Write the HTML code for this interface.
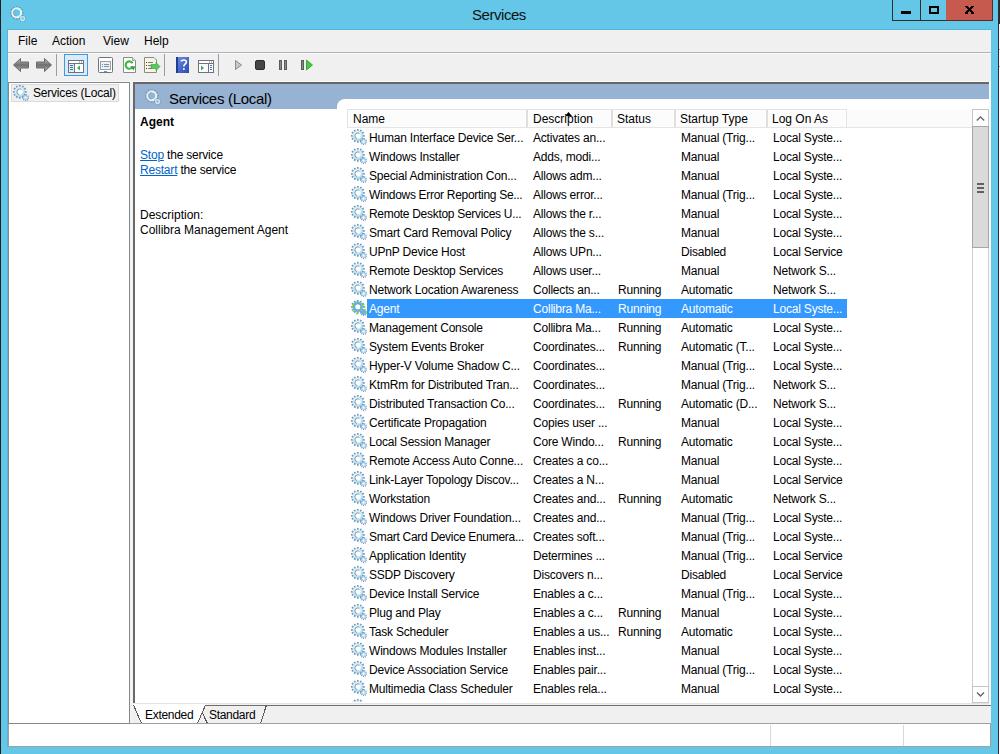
<!DOCTYPE html>
<html><head><meta charset="utf-8"><style>
html,body{margin:0;padding:0}
body{width:1000px;height:754px;overflow:hidden;position:relative;background:#64c7e8;font-family:"Liberation Sans",sans-serif;font-size:12px;color:#000}
div{position:absolute}
.t{white-space:pre}
.lk{color:#0066cc;text-decoration:underline}
</style></head><body>
<svg width="0" height="0" style="position:absolute"><defs><symbol id="g" viewBox="0 0 16 16">
<radialGradient id="rg" cx="0.4" cy="0.35" r="0.7"><stop offset="0" stop-color="#eefafe"/><stop offset="0.6" stop-color="#c8ecf9"/><stop offset="1" stop-color="#9cc8ee"/></radialGradient>
<path d="M10.80,5.95 L13.70,5.95 L13.70,7.65 L10.80,7.65ZM10.69,8.06 L13.20,9.51 L12.35,10.99 L9.84,9.54ZM9.54,9.84 L10.99,12.35 L9.51,13.20 L8.06,10.69ZM7.65,10.80 L7.65,13.70 L5.95,13.70 L5.95,10.80ZM5.54,10.69 L4.09,13.20 L2.61,12.35 L4.06,9.84ZM3.76,9.54 L1.25,10.99 L0.40,9.51 L2.91,8.06ZM2.80,7.65 L-0.10,7.65 L-0.10,5.95 L2.80,5.95ZM2.91,5.54 L0.40,4.09 L1.25,2.61 L3.76,4.06ZM4.06,3.76 L2.61,1.25 L4.09,0.40 L5.54,2.91ZM5.95,2.80 L5.95,-0.10 L7.65,-0.10 L7.65,2.80ZM8.06,2.91 L9.51,0.40 L10.99,1.25 L9.54,3.76ZM9.84,4.06 L12.35,2.61 L13.20,4.09 L10.69,5.54Z" fill="#6f98bf"/>
<circle cx="6.8" cy="6.8" r="5.3" fill="url(#rg)"/>
<circle cx="6.8" cy="6.8" r="2.8" fill="#fff"/>
<circle cx="6.8" cy="6.8" r="2.9" fill="none" stroke="#6b7682" stroke-width="0.8" stroke-dasharray="10 8.2" stroke-dashoffset="-5"/>
<path d="M14.47,12.42 L16.14,12.76 L15.92,13.83 L14.25,13.50ZM14.15,13.67 L15.21,14.99 L14.35,15.68 L13.29,14.35ZM13.10,14.41 L13.06,16.11 L11.96,16.08 L12.00,14.39ZM11.82,14.31 L10.69,15.59 L9.87,14.86 L11.00,13.58ZM10.90,13.41 L9.22,13.66 L9.06,12.58 L10.74,12.32ZM10.78,12.13 L9.33,11.24 L9.90,10.30 L11.35,11.19ZM11.51,11.07 L10.97,9.46 L12.01,9.11 L12.55,10.72ZM12.75,10.72 L13.37,9.14 L14.39,9.54 L13.77,11.13ZM13.92,11.26 L15.41,10.44 L15.94,11.41 L14.44,12.22Z" fill="#7199bf"/>
<circle cx="12.6" cy="12.6" r="2.4" fill="#b4d6ee"/>
<circle cx="12.6" cy="12.6" r="1.1" fill="#fff"/>
</symbol>
<symbol id="gs" viewBox="0 0 16 16">
<path d="M10.80,5.95 L13.70,5.95 L13.70,7.65 L10.80,7.65ZM10.69,8.06 L13.20,9.51 L12.35,10.99 L9.84,9.54ZM9.54,9.84 L10.99,12.35 L9.51,13.20 L8.06,10.69ZM7.65,10.80 L7.65,13.70 L5.95,13.70 L5.95,10.80ZM5.54,10.69 L4.09,13.20 L2.61,12.35 L4.06,9.84ZM3.76,9.54 L1.25,10.99 L0.40,9.51 L2.91,8.06ZM2.80,7.65 L-0.10,7.65 L-0.10,5.95 L2.80,5.95ZM2.91,5.54 L0.40,4.09 L1.25,2.61 L3.76,4.06ZM4.06,3.76 L2.61,1.25 L4.09,0.40 L5.54,2.91ZM5.95,2.80 L5.95,-0.10 L7.65,-0.10 L7.65,2.80ZM8.06,2.91 L9.51,0.40 L10.99,1.25 L9.54,3.76ZM9.84,4.06 L12.35,2.61 L13.20,4.09 L10.69,5.54Z" fill="#5ea4f0"/>
<circle cx="6.8" cy="6.8" r="5.3" fill="#72b2f5"/>
<circle cx="6.8" cy="6.8" r="3.6" fill="#5a9cec"/>
<circle cx="6.8" cy="6.8" r="2.6" fill="#fff"/>
<path d="M14.47,12.42 L16.14,12.76 L15.92,13.83 L14.25,13.50ZM14.15,13.67 L15.21,14.99 L14.35,15.68 L13.29,14.35ZM13.10,14.41 L13.06,16.11 L11.96,16.08 L12.00,14.39ZM11.82,14.31 L10.69,15.59 L9.87,14.86 L11.00,13.58ZM10.90,13.41 L9.22,13.66 L9.06,12.58 L10.74,12.32ZM10.78,12.13 L9.33,11.24 L9.90,10.30 L11.35,11.19ZM11.51,11.07 L10.97,9.46 L12.01,9.11 L12.55,10.72ZM12.75,10.72 L13.37,9.14 L14.39,9.54 L13.77,11.13ZM13.92,11.26 L15.41,10.44 L15.94,11.41 L14.44,12.22Z" fill="#5ea4f0"/>
<circle cx="12.6" cy="12.6" r="2.4" fill="#6aaaf2"/>
<circle cx="12.6" cy="12.6" r="1.1" fill="#7ed321"/>
<g fill="#8ad11c"><rect x="1" y="4" width="2.5" height="1.5"/><rect x="4.5" y="1.5" width="2" height="1.5"/><rect x="8.5" y="1.5" width="1.5" height="1.5"/><rect x="11.5" y="4" width="2" height="1.5"/><rect x="0.5" y="6" width="1.5" height="2"/><rect x="12.8" y="6" width="1.5" height="2"/><rect x="1.8" y="10.5" width="2.2" height="1.5"/><rect x="5" y="12.8" width="2" height="1.5"/><rect x="9" y="7" width="1.3" height="2"/><rect x="7.5" y="9.8" width="1.5" height="1.3"/><rect x="14.5" y="12" width="1.2" height="1.5"/><rect x="13.5" y="9" width="1.5" height="1.3"/></g>
</symbol>
<symbol id="gw" viewBox="0 0 16 16">
<path d="M10.80,5.95 L13.70,5.95 L13.70,7.65 L10.80,7.65ZM10.69,8.06 L13.20,9.51 L12.35,10.99 L9.84,9.54ZM9.54,9.84 L10.99,12.35 L9.51,13.20 L8.06,10.69ZM7.65,10.80 L7.65,13.70 L5.95,13.70 L5.95,10.80ZM5.54,10.69 L4.09,13.20 L2.61,12.35 L4.06,9.84ZM3.76,9.54 L1.25,10.99 L0.40,9.51 L2.91,8.06ZM2.80,7.65 L-0.10,7.65 L-0.10,5.95 L2.80,5.95ZM2.91,5.54 L0.40,4.09 L1.25,2.61 L3.76,4.06ZM4.06,3.76 L2.61,1.25 L4.09,0.40 L5.54,2.91ZM5.95,2.80 L5.95,-0.10 L7.65,-0.10 L7.65,2.80ZM8.06,2.91 L9.51,0.40 L10.99,1.25 L9.54,3.76ZM9.84,4.06 L12.35,2.61 L13.20,4.09 L10.69,5.54Z" fill="#7890a2" fill-opacity="0.85"/>
<circle cx="6.8" cy="6.8" r="4.4" fill="none" stroke="#dcf5fc" stroke-width="2.2"/>
<circle cx="6.8" cy="6.8" r="3.4" fill="none" stroke="#7a7068" stroke-width="0.7" stroke-dasharray="10 11.4" stroke-dashoffset="-5.3" stroke-opacity="0.7"/>
<path d="M14.47,12.42 L16.14,12.76 L15.92,13.83 L14.25,13.50ZM14.15,13.67 L15.21,14.99 L14.35,15.68 L13.29,14.35ZM13.10,14.41 L13.06,16.11 L11.96,16.08 L12.00,14.39ZM11.82,14.31 L10.69,15.59 L9.87,14.86 L11.00,13.58ZM10.90,13.41 L9.22,13.66 L9.06,12.58 L10.74,12.32ZM10.78,12.13 L9.33,11.24 L9.90,10.30 L11.35,11.19ZM11.51,11.07 L10.97,9.46 L12.01,9.11 L12.55,10.72ZM12.75,10.72 L13.37,9.14 L14.39,9.54 L13.77,11.13ZM13.92,11.26 L15.41,10.44 L15.94,11.41 L14.44,12.22Z" fill="#7890a2" fill-opacity="0.75"/>
<circle cx="12.6" cy="12.6" r="1.9" fill="none" stroke="#cfe9f5" stroke-width="1.3"/>
</symbol></defs></svg>
<div style="left:0px;top:0px;width:1px;height:754px;background:#231f20"></div>
<div style="left:998px;top:0px;width:2px;height:754px;background:#fdfdfd;border-left:1px solid #2b2e31;box-sizing:border-box"></div>
<div style="left:999px;top:0px;width:1px;height:24px;background:#2b2e31"></div>
<div style="left:999px;top:49px;width:1px;height:1px;background:#a8a8a8"></div>
<div style="left:999px;top:66px;width:1px;height:1px;background:#a8a8a8"></div>
<svg style="position:absolute;left:10px;top:6px" width="16" height="16"><use href="#gw"/></svg>
<div class="t" style="left:472px;top:5px;font-size:15px;line-height:20px;color:#111;letter-spacing:-0.45px">Services</div>
<div style="left:892px;top:0px;width:29px;height:21px;border:1px solid #2e2e2e;border-top:none;box-sizing:border-box;background:#64c7e8"></div>
<div style="left:901px;top:11px;width:10px;height:3px;background:#000"></div>
<div style="left:921px;top:0px;width:26px;height:21px;border:1px solid #2e2e2e;border-top:none;border-left:none;box-sizing:border-box;background:#64c7e8"></div>
<div style="left:929px;top:6px;width:10px;height:8px;border:2px solid #000;box-sizing:border-box"></div>
<div style="left:946px;top:0px;width:47px;height:21px;border:1px solid #5c2a25;border-top:none;border-left:none;box-sizing:border-box;background:#c75a4f"></div>
<svg style="position:absolute;left:960px;top:0" width="20" height="20" fill="#000"><rect x="5" y="6" width="3" height="1"/><rect x="11" y="6" width="3" height="1"/><rect x="6" y="7" width="3" height="1"/><rect x="10" y="7" width="3" height="1"/><rect x="7" y="8" width="5" height="1"/><rect x="8" y="9" width="3" height="1"/><rect x="7" y="10" width="5" height="1"/><rect x="6" y="11" width="3" height="1"/><rect x="10" y="11" width="3" height="1"/><rect x="5" y="12" width="3" height="1"/><rect x="11" y="12" width="3" height="1"/><rect x="5" y="13" width="3" height="1"/><rect x="11" y="13" width="3" height="1"/></svg>
<div style="left:7px;top:29px;width:984px;height:718px;background:#f0f0f0;border-left:1px solid #58b4d6;border-top:1px solid #58b4d6;box-sizing:border-box"></div>
<div class="t" style="left:18px;top:32px;line-height:18px">File</div>
<div class="t" style="left:52px;top:32px;line-height:18px">Action</div>
<div class="t" style="left:103px;top:32px;line-height:18px">View</div>
<div class="t" style="left:144px;top:32px;line-height:18px">Help</div>
<div style="left:8px;top:52px;width:983px;height:1px;background:#b4b4b4"></div>
<div style="left:8px;top:53px;width:983px;height:1px;background:#f7f9fc"></div>
<div style="left:56px;top:54px;width:1px;height:22px;background:#9c9c9c"></div>
<div style="left:164px;top:54px;width:1px;height:22px;background:#9c9c9c"></div>
<div style="left:218px;top:54px;width:1px;height:22px;background:#9c9c9c"></div>
<div style="left:64px;top:54px;width:24px;height:22px;background:#dbe9f9;border:1px solid #3c9be6;box-sizing:border-box"></div>
<svg style="position:absolute;left:0;top:52px" width="330" height="30">
<defs><linearGradient id="ag" x1="0" y1="0" x2="0" y2="1"><stop offset="0" stop-color="#c4c4c4"/><stop offset="0.5" stop-color="#6e6e6e"/><stop offset="1" stop-color="#b8b8b8"/></linearGradient></defs>
<!-- back -->
<path d="M13.5 13 L20.5 6.5 L20.5 10 L28.5 10 L28.5 16 L20.5 16 L20.5 19.5 Z" fill="url(#ag)" stroke="#6a6a6a" stroke-width="1"/>
<!-- forward -->
<path d="M51.5 13 L44.5 6.5 L44.5 10 L36.5 10 L36.5 16 L44.5 16 L44.5 19.5 Z" fill="url(#ag)" stroke="#6a6a6a" stroke-width="1"/>
<!-- tree toggle icon -->
<rect x="68.5" y="8.5" width="15" height="12" fill="#fff" stroke="#6e7380"/>
<path d="M69 11.5 H83" stroke="#6e7380"/><rect x="79" y="9.5" width="1" height="1" fill="#6e7380"/><rect x="81" y="9.5" width="1" height="1" fill="#6e7380"/>
<rect x="69" y="12" width="5" height="8" fill="#e8eaee"/>
<path d="M74.5 12 V20" stroke="#6e7380"/>
<rect x="70" y="13" width="3" height="1" fill="#3d6fc4"/><rect x="70" y="15" width="3" height="1" fill="#3d6fc4"/><rect x="70" y="17" width="3" height="1" fill="#3d6fc4"/>
<path d="M77 16 L80 13.5 L80 18.5Z" fill="#37b24d"/>
<!-- properties -->
<rect x="98.5" y="5.5" width="14" height="15" rx="1" fill="#fff" stroke="#6e7380"/>
<rect x="100.5" y="9.5" width="10" height="8" fill="#eef0f3" stroke="#9aa0aa"/>
<rect x="102" y="12" width="1" height="1" fill="#2aa0ff"/><rect x="104" y="12" width="5" height="1" fill="#8a909a"/>
<rect x="102" y="14" width="1" height="1" fill="#8a909a"/><rect x="104" y="14" width="5" height="1" fill="#8a909a"/>
<rect x="104" y="19" width="3" height="1" fill="#2aa0ff"/>
<!-- refresh -->
<path d="M123.5 5.5 H132.5 L135.5 8.5 V20.5 H123.5 Z" fill="#fff" stroke="#8a8a8a"/>
<path d="M132.5 5.5 V8.5 H135.5" fill="#e8e8e8" stroke="#a0a0a0"/>
<path d="M132.4 15.2 A3.7 3.7 0 1 1 132.6 11.2" fill="none" stroke="#3cb93c" stroke-width="2.1"/>
<path d="M130.2 14.2 L135.2 14.2 L133.6 18.6 Z" fill="#2e9e2e"/>
<!-- export -->
<path d="M144.5 5.5 H154 L156.5 8 V20.5 H144.5 Z" fill="#fbf5dc" stroke="#8a8a8a"/>
<rect x="146" y="10" width="1" height="1" fill="#444"/><rect x="148" y="10" width="5" height="1" fill="#6a7bb0"/>
<rect x="146" y="13" width="1" height="1" fill="#444"/><rect x="148" y="13" width="4" height="1" fill="#6a7bb0"/>
<rect x="146" y="16" width="1" height="1" fill="#444"/><rect x="148" y="16" width="4" height="1" fill="#6a7bb0"/>
<path d="M151 12.5 H156 V10.5 L160 14.5 L156 18.5 V16.5 H151 Z" fill="#5cc95c" stroke="#3a9a3a" stroke-width="0.6"/>
<!-- help -->
<defs><linearGradient id="hg" x1="0" y1="0" x2="1" y2="1"><stop offset="0" stop-color="#6f8fe0"/><stop offset="1" stop-color="#2a48b0"/></linearGradient></defs>
<rect x="176" y="5" width="13" height="16" fill="url(#hg)"/>
<rect x="176" y="5" width="2" height="16" fill="#1f3d96"/>
<path d="M181.2 9.6 C181.2 7.6 186.4 7.4 186.4 9.9 C186.4 11.9 183.8 12 183.8 14.6" fill="none" stroke="#fff" stroke-width="1.6"/>
<rect x="183" y="16.2" width="1.7" height="1.7" fill="#fff"/>
<!-- action pane -->
<rect x="198.5" y="8.5" width="15" height="12" fill="#fff" stroke="#6e7380"/>
<path d="M199 11.5 H213" stroke="#6e7380"/>
<rect x="209" y="9.5" width="1" height="1" fill="#6e7380"/><rect x="211" y="9.5" width="1" height="1" fill="#6e7380"/>
<path d="M208.5 12 V20" stroke="#6e7380"/>
<path d="M201 13.5 L204 16 L201 18.5Z" fill="#37b24d"/>
<rect x="210" y="13" width="2" height="1" fill="#3d6fc4"/><rect x="210" y="15" width="2" height="1" fill="#3d6fc4"/><rect x="210" y="17" width="2" height="1" fill="#3d6fc4"/>
<!-- play disabled -->
<path d="M235.5 8.5 L241.5 13 L235.5 17.5 Z" fill="#c8c8c8" stroke="#8a8a8a"/>
<!-- stop -->
<rect x="255.5" y="8.5" width="9" height="9" rx="1.5" fill="#454545" stroke="#2a2a2a"/>
<!-- pause -->
<rect x="279.5" y="8.5" width="2" height="9" fill="#8a8a8a" stroke="#5a5a5a"/>
<rect x="284.5" y="8.5" width="2" height="9" fill="#8a8a8a" stroke="#5a5a5a"/>
<!-- resume -->
<rect x="301.5" y="8.5" width="2" height="9" fill="#8a8a8a" stroke="#5a5a5a"/>
<path d="M306.5 8 L312.5 13 L306.5 18 Z" fill="#48c83c" stroke="#2a9a2a" stroke-width="0.8"/>
</svg>

<div style="left:8px;top:81px;width:983px;height:1px;background:#f8f8f8"></div>
<div style="left:8px;top:82px;width:122px;height:642px;background:#fff;border:1px solid #828790;box-sizing:border-box"></div>
<div style="left:11px;top:84px;width:108px;height:18px;background:#f0f0f0;border:1px solid #dadada;box-sizing:border-box"></div>
<svg style="position:absolute;left:13px;top:85px" width="16" height="16"><use href="#g"/></svg>
<div class="t" style="left:33px;top:85px;line-height:16px;letter-spacing:-0.2px">Services (Local)</div>
<div style="left:130px;top:82px;width:3px;height:642px;background:#f3f3f3"></div>
<div style="left:130px;top:723px;width:3px;height:1px;background:#9a9ea5"></div>
<div style="left:133px;top:82px;width:856px;height:621px;background:#fff;border-left:2px solid #686868;border-top:2px solid #686868;box-sizing:border-box"></div>
<div style="left:989px;top:82px;width:2px;height:664px;background:#fcfcfc"></div>
<div style="left:135px;top:84px;width:854px;height:25px;background:#97b2d2"></div>
<svg style="position:absolute;left:145px;top:89px" width="16" height="16"><use href="#gw"/></svg>
<div class="t" style="left:169px;top:89px;font-size:15px;line-height:20px;color:#000;letter-spacing:-0.3px">Services (Local)</div>
<div style="left:337px;top:99px;width:652px;height:12px;background:#fff;border-top-left-radius:8px"></div>
<div class="t" style="left:140px;top:114px;line-height:16px;font-weight:bold">Agent</div>
<div class="t" style="left:140px;top:148px;line-height:15px;letter-spacing:-0.2px"><span class="lk">Stop</span> the service<br><span class="lk">Restart</span> the service</div>
<div class="t" style="left:140px;top:208px;line-height:15px">Description:<br>Collibra Management Agent</div>
<div style="left:347px;top:109px;width:625px;height:19px;background:#fbfbfb;border-bottom:1px solid #e5e5e5;box-sizing:border-box"></div>
<div style="left:347px;top:109px;width:500px;height:18px;background:#fcfcfc;border-top:1px solid #e3e3e3;border-left:1px solid #e3e3e3;box-sizing:border-box;box-shadow:inset 1px 1px 0 #fff"></div>
<div style="left:525px;top:110px;width:4px;height:17px;background:#fff"></div>
<div style="left:526px;top:110px;width:2px;height:17px;background:#dedede"></div>
<div style="left:610px;top:110px;width:4px;height:17px;background:#fff"></div>
<div style="left:611px;top:110px;width:2px;height:17px;background:#dedede"></div>
<div style="left:673px;top:110px;width:4px;height:17px;background:#fff"></div>
<div style="left:674px;top:110px;width:2px;height:17px;background:#dedede"></div>
<div style="left:765px;top:110px;width:4px;height:17px;background:#fff"></div>
<div style="left:766px;top:110px;width:2px;height:17px;background:#dedede"></div>
<div style="left:845px;top:110px;width:1px;height:17px;background:#fff"></div>
<div style="left:846px;top:109px;width:1px;height:18px;background:#e3e3e3"></div>
<div class="t" style="left:353px;top:111px;line-height:17px">Name</div>
<div class="t" style="left:533px;top:111px;line-height:17px">Description</div>
<div class="t" style="left:617px;top:111px;line-height:17px">Status</div>
<div class="t" style="left:680px;top:111px;line-height:17px">Startup Type</div>
<div class="t" style="left:772px;top:111px;line-height:17px">Log On As</div>
<svg style="position:absolute;left:564px;top:111px" width="9" height="6"><path d="M1 5 L4.5 1 L8 5Z" fill="#000"/></svg>
<svg style="position:absolute;left:351px;top:129px" width="16" height="16"><use href="#g"/></svg>
<div class="t" style="left:369px;top:129px;line-height:19px;color:#000;letter-spacing:-0.2px">Human Interface Device Ser...</div>
<div class="t" style="left:533px;top:129px;line-height:19px;color:#000;letter-spacing:-0.2px">Activates an...</div>
<div class="t" style="left:681px;top:129px;line-height:19px;color:#000;letter-spacing:-0.2px">Manual (Trig...</div>
<div class="t" style="left:773px;top:129px;line-height:19px;color:#000;letter-spacing:-0.2px">Local Syste...</div>
<svg style="position:absolute;left:351px;top:148px" width="16" height="16"><use href="#g"/></svg>
<div class="t" style="left:369px;top:148px;line-height:19px;color:#000;letter-spacing:-0.2px">Windows Installer</div>
<div class="t" style="left:533px;top:148px;line-height:19px;color:#000;letter-spacing:-0.2px">Adds, modi...</div>
<div class="t" style="left:681px;top:148px;line-height:19px;color:#000;letter-spacing:-0.2px">Manual</div>
<div class="t" style="left:773px;top:148px;line-height:19px;color:#000;letter-spacing:-0.2px">Local Syste...</div>
<svg style="position:absolute;left:351px;top:167px" width="16" height="16"><use href="#g"/></svg>
<div class="t" style="left:369px;top:167px;line-height:19px;color:#000;letter-spacing:-0.2px">Special Administration Con...</div>
<div class="t" style="left:533px;top:167px;line-height:19px;color:#000;letter-spacing:-0.2px">Allows adm...</div>
<div class="t" style="left:681px;top:167px;line-height:19px;color:#000;letter-spacing:-0.2px">Manual</div>
<div class="t" style="left:773px;top:167px;line-height:19px;color:#000;letter-spacing:-0.2px">Local Syste...</div>
<svg style="position:absolute;left:351px;top:186px" width="16" height="16"><use href="#g"/></svg>
<div class="t" style="left:369px;top:186px;line-height:19px;color:#000;letter-spacing:-0.3px">Windows Error Reporting Se...</div>
<div class="t" style="left:533px;top:186px;line-height:19px;color:#000;letter-spacing:-0.2px">Allows error...</div>
<div class="t" style="left:681px;top:186px;line-height:19px;color:#000;letter-spacing:-0.2px">Manual (Trig...</div>
<div class="t" style="left:773px;top:186px;line-height:19px;color:#000;letter-spacing:-0.2px">Local Syste...</div>
<svg style="position:absolute;left:351px;top:205px" width="16" height="16"><use href="#g"/></svg>
<div class="t" style="left:369px;top:205px;line-height:19px;color:#000;letter-spacing:-0.3px">Remote Desktop Services U...</div>
<div class="t" style="left:533px;top:205px;line-height:19px;color:#000;letter-spacing:-0.2px">Allows the r...</div>
<div class="t" style="left:681px;top:205px;line-height:19px;color:#000;letter-spacing:-0.2px">Manual</div>
<div class="t" style="left:773px;top:205px;line-height:19px;color:#000;letter-spacing:-0.2px">Local Syste...</div>
<svg style="position:absolute;left:351px;top:224px" width="16" height="16"><use href="#g"/></svg>
<div class="t" style="left:369px;top:224px;line-height:19px;color:#000;letter-spacing:-0.2px">Smart Card Removal Policy</div>
<div class="t" style="left:533px;top:224px;line-height:19px;color:#000;letter-spacing:-0.2px">Allows the s...</div>
<div class="t" style="left:681px;top:224px;line-height:19px;color:#000;letter-spacing:-0.2px">Manual</div>
<div class="t" style="left:773px;top:224px;line-height:19px;color:#000;letter-spacing:-0.2px">Local Syste...</div>
<svg style="position:absolute;left:351px;top:243px" width="16" height="16"><use href="#g"/></svg>
<div class="t" style="left:369px;top:243px;line-height:19px;color:#000;letter-spacing:-0.2px">UPnP Device Host</div>
<div class="t" style="left:533px;top:243px;line-height:19px;color:#000;letter-spacing:-0.2px">Allows UPn...</div>
<div class="t" style="left:681px;top:243px;line-height:19px;color:#000;letter-spacing:-0.2px">Disabled</div>
<div class="t" style="left:773px;top:243px;line-height:19px;color:#000;letter-spacing:-0.2px">Local Service</div>
<svg style="position:absolute;left:351px;top:262px" width="16" height="16"><use href="#g"/></svg>
<div class="t" style="left:369px;top:262px;line-height:19px;color:#000;letter-spacing:-0.2px">Remote Desktop Services</div>
<div class="t" style="left:533px;top:262px;line-height:19px;color:#000;letter-spacing:-0.2px">Allows user...</div>
<div class="t" style="left:681px;top:262px;line-height:19px;color:#000;letter-spacing:-0.2px">Manual</div>
<div class="t" style="left:773px;top:262px;line-height:19px;color:#000;letter-spacing:-0.2px">Network S...</div>
<svg style="position:absolute;left:351px;top:281px" width="16" height="16"><use href="#g"/></svg>
<div class="t" style="left:369px;top:281px;line-height:19px;color:#000;letter-spacing:-0.2px">Network Location Awareness</div>
<div class="t" style="left:533px;top:281px;line-height:19px;color:#000;letter-spacing:-0.2px">Collects an...</div>
<div class="t" style="left:618px;top:281px;line-height:19px;color:#000;letter-spacing:-0.2px">Running</div>
<div class="t" style="left:681px;top:281px;line-height:19px;color:#000;letter-spacing:-0.2px">Automatic</div>
<div class="t" style="left:773px;top:281px;line-height:19px;color:#000;letter-spacing:-0.2px">Network S...</div>
<div style="left:367px;top:299px;width:480px;height:19px;background:#3399ff"></div>
<svg style="position:absolute;left:351px;top:300px" width="16" height="16"><use href="#gs"/></svg>
<div class="t" style="left:369px;top:300px;line-height:19px;color:#fff;letter-spacing:-0.2px">Agent</div>
<div class="t" style="left:533px;top:300px;line-height:19px;color:#fff;letter-spacing:-0.2px">Collibra Ma...</div>
<div class="t" style="left:618px;top:300px;line-height:19px;color:#fff;letter-spacing:-0.2px">Running</div>
<div class="t" style="left:681px;top:300px;line-height:19px;color:#fff;letter-spacing:-0.2px">Automatic</div>
<div class="t" style="left:773px;top:300px;line-height:19px;color:#fff;letter-spacing:-0.2px">Local Syste...</div>
<svg style="position:absolute;left:351px;top:319px" width="16" height="16"><use href="#g"/></svg>
<div class="t" style="left:369px;top:319px;line-height:19px;color:#000;letter-spacing:-0.2px">Management Console</div>
<div class="t" style="left:533px;top:319px;line-height:19px;color:#000;letter-spacing:-0.2px">Collibra Ma...</div>
<div class="t" style="left:618px;top:319px;line-height:19px;color:#000;letter-spacing:-0.2px">Running</div>
<div class="t" style="left:681px;top:319px;line-height:19px;color:#000;letter-spacing:-0.2px">Automatic</div>
<div class="t" style="left:773px;top:319px;line-height:19px;color:#000;letter-spacing:-0.2px">Local Syste...</div>
<svg style="position:absolute;left:351px;top:338px" width="16" height="16"><use href="#g"/></svg>
<div class="t" style="left:369px;top:338px;line-height:19px;color:#000;letter-spacing:-0.2px">System Events Broker</div>
<div class="t" style="left:533px;top:338px;line-height:19px;color:#000;letter-spacing:-0.2px">Coordinates...</div>
<div class="t" style="left:618px;top:338px;line-height:19px;color:#000;letter-spacing:-0.2px">Running</div>
<div class="t" style="left:681px;top:338px;line-height:19px;color:#000;letter-spacing:-0.2px">Automatic (T...</div>
<div class="t" style="left:773px;top:338px;line-height:19px;color:#000;letter-spacing:-0.2px">Local Syste...</div>
<svg style="position:absolute;left:351px;top:357px" width="16" height="16"><use href="#g"/></svg>
<div class="t" style="left:369px;top:357px;line-height:19px;color:#000;letter-spacing:-0.2px">Hyper-V Volume Shadow C...</div>
<div class="t" style="left:533px;top:357px;line-height:19px;color:#000;letter-spacing:-0.2px">Coordinates...</div>
<div class="t" style="left:681px;top:357px;line-height:19px;color:#000;letter-spacing:-0.2px">Manual (Trig...</div>
<div class="t" style="left:773px;top:357px;line-height:19px;color:#000;letter-spacing:-0.2px">Local Syste...</div>
<svg style="position:absolute;left:351px;top:376px" width="16" height="16"><use href="#g"/></svg>
<div class="t" style="left:369px;top:376px;line-height:19px;color:#000;letter-spacing:-0.2px">KtmRm for Distributed Tran...</div>
<div class="t" style="left:533px;top:376px;line-height:19px;color:#000;letter-spacing:-0.2px">Coordinates...</div>
<div class="t" style="left:681px;top:376px;line-height:19px;color:#000;letter-spacing:-0.2px">Manual (Trig...</div>
<div class="t" style="left:773px;top:376px;line-height:19px;color:#000;letter-spacing:-0.2px">Network S...</div>
<svg style="position:absolute;left:351px;top:395px" width="16" height="16"><use href="#g"/></svg>
<div class="t" style="left:369px;top:395px;line-height:19px;color:#000;letter-spacing:-0.2px">Distributed Transaction Co...</div>
<div class="t" style="left:533px;top:395px;line-height:19px;color:#000;letter-spacing:-0.2px">Coordinates...</div>
<div class="t" style="left:618px;top:395px;line-height:19px;color:#000;letter-spacing:-0.2px">Running</div>
<div class="t" style="left:681px;top:395px;line-height:19px;color:#000;letter-spacing:-0.2px">Automatic (D...</div>
<div class="t" style="left:773px;top:395px;line-height:19px;color:#000;letter-spacing:-0.2px">Network S...</div>
<svg style="position:absolute;left:351px;top:414px" width="16" height="16"><use href="#g"/></svg>
<div class="t" style="left:369px;top:414px;line-height:19px;color:#000;letter-spacing:-0.2px">Certificate Propagation</div>
<div class="t" style="left:533px;top:414px;line-height:19px;color:#000;letter-spacing:-0.2px">Copies user ...</div>
<div class="t" style="left:681px;top:414px;line-height:19px;color:#000;letter-spacing:-0.2px">Manual</div>
<div class="t" style="left:773px;top:414px;line-height:19px;color:#000;letter-spacing:-0.2px">Local Syste...</div>
<svg style="position:absolute;left:351px;top:433px" width="16" height="16"><use href="#g"/></svg>
<div class="t" style="left:369px;top:433px;line-height:19px;color:#000;letter-spacing:-0.2px">Local Session Manager</div>
<div class="t" style="left:533px;top:433px;line-height:19px;color:#000;letter-spacing:-0.2px">Core Windo...</div>
<div class="t" style="left:618px;top:433px;line-height:19px;color:#000;letter-spacing:-0.2px">Running</div>
<div class="t" style="left:681px;top:433px;line-height:19px;color:#000;letter-spacing:-0.2px">Automatic</div>
<div class="t" style="left:773px;top:433px;line-height:19px;color:#000;letter-spacing:-0.2px">Local Syste...</div>
<svg style="position:absolute;left:351px;top:452px" width="16" height="16"><use href="#g"/></svg>
<div class="t" style="left:369px;top:452px;line-height:19px;color:#000;letter-spacing:-0.2px">Remote Access Auto Conne...</div>
<div class="t" style="left:533px;top:452px;line-height:19px;color:#000;letter-spacing:-0.2px">Creates a co...</div>
<div class="t" style="left:681px;top:452px;line-height:19px;color:#000;letter-spacing:-0.2px">Manual</div>
<div class="t" style="left:773px;top:452px;line-height:19px;color:#000;letter-spacing:-0.2px">Local Syste...</div>
<svg style="position:absolute;left:351px;top:471px" width="16" height="16"><use href="#g"/></svg>
<div class="t" style="left:369px;top:471px;line-height:19px;color:#000;letter-spacing:-0.2px">Link-Layer Topology Discov...</div>
<div class="t" style="left:533px;top:471px;line-height:19px;color:#000;letter-spacing:-0.2px">Creates a N...</div>
<div class="t" style="left:681px;top:471px;line-height:19px;color:#000;letter-spacing:-0.2px">Manual</div>
<div class="t" style="left:773px;top:471px;line-height:19px;color:#000;letter-spacing:-0.2px">Local Service</div>
<svg style="position:absolute;left:351px;top:490px" width="16" height="16"><use href="#g"/></svg>
<div class="t" style="left:369px;top:490px;line-height:19px;color:#000;letter-spacing:-0.2px">Workstation</div>
<div class="t" style="left:533px;top:490px;line-height:19px;color:#000;letter-spacing:-0.2px">Creates and...</div>
<div class="t" style="left:618px;top:490px;line-height:19px;color:#000;letter-spacing:-0.2px">Running</div>
<div class="t" style="left:681px;top:490px;line-height:19px;color:#000;letter-spacing:-0.2px">Automatic</div>
<div class="t" style="left:773px;top:490px;line-height:19px;color:#000;letter-spacing:-0.2px">Network S...</div>
<svg style="position:absolute;left:351px;top:509px" width="16" height="16"><use href="#g"/></svg>
<div class="t" style="left:369px;top:509px;line-height:19px;color:#000;letter-spacing:-0.2px">Windows Driver Foundation...</div>
<div class="t" style="left:533px;top:509px;line-height:19px;color:#000;letter-spacing:-0.2px">Creates and...</div>
<div class="t" style="left:681px;top:509px;line-height:19px;color:#000;letter-spacing:-0.2px">Manual (Trig...</div>
<div class="t" style="left:773px;top:509px;line-height:19px;color:#000;letter-spacing:-0.2px">Local Syste...</div>
<svg style="position:absolute;left:351px;top:528px" width="16" height="16"><use href="#g"/></svg>
<div class="t" style="left:369px;top:528px;line-height:19px;color:#000;letter-spacing:-0.3px">Smart Card Device Enumera...</div>
<div class="t" style="left:533px;top:528px;line-height:19px;color:#000;letter-spacing:-0.2px">Creates soft...</div>
<div class="t" style="left:681px;top:528px;line-height:19px;color:#000;letter-spacing:-0.2px">Manual (Trig...</div>
<div class="t" style="left:773px;top:528px;line-height:19px;color:#000;letter-spacing:-0.2px">Local Syste...</div>
<svg style="position:absolute;left:351px;top:547px" width="16" height="16"><use href="#g"/></svg>
<div class="t" style="left:369px;top:547px;line-height:19px;color:#000;letter-spacing:-0.2px">Application Identity</div>
<div class="t" style="left:533px;top:547px;line-height:19px;color:#000;letter-spacing:-0.2px">Determines ...</div>
<div class="t" style="left:681px;top:547px;line-height:19px;color:#000;letter-spacing:-0.2px">Manual (Trig...</div>
<div class="t" style="left:773px;top:547px;line-height:19px;color:#000;letter-spacing:-0.2px">Local Service</div>
<svg style="position:absolute;left:351px;top:566px" width="16" height="16"><use href="#g"/></svg>
<div class="t" style="left:369px;top:566px;line-height:19px;color:#000;letter-spacing:-0.2px">SSDP Discovery</div>
<div class="t" style="left:533px;top:566px;line-height:19px;color:#000;letter-spacing:-0.2px">Discovers n...</div>
<div class="t" style="left:681px;top:566px;line-height:19px;color:#000;letter-spacing:-0.2px">Disabled</div>
<div class="t" style="left:773px;top:566px;line-height:19px;color:#000;letter-spacing:-0.2px">Local Service</div>
<svg style="position:absolute;left:351px;top:585px" width="16" height="16"><use href="#g"/></svg>
<div class="t" style="left:369px;top:585px;line-height:19px;color:#000;letter-spacing:-0.2px">Device Install Service</div>
<div class="t" style="left:533px;top:585px;line-height:19px;color:#000;letter-spacing:-0.2px">Enables a c...</div>
<div class="t" style="left:681px;top:585px;line-height:19px;color:#000;letter-spacing:-0.2px">Manual (Trig...</div>
<div class="t" style="left:773px;top:585px;line-height:19px;color:#000;letter-spacing:-0.2px">Local Syste...</div>
<svg style="position:absolute;left:351px;top:604px" width="16" height="16"><use href="#g"/></svg>
<div class="t" style="left:369px;top:604px;line-height:19px;color:#000;letter-spacing:-0.2px">Plug and Play</div>
<div class="t" style="left:533px;top:604px;line-height:19px;color:#000;letter-spacing:-0.2px">Enables a c...</div>
<div class="t" style="left:618px;top:604px;line-height:19px;color:#000;letter-spacing:-0.2px">Running</div>
<div class="t" style="left:681px;top:604px;line-height:19px;color:#000;letter-spacing:-0.2px">Manual</div>
<div class="t" style="left:773px;top:604px;line-height:19px;color:#000;letter-spacing:-0.2px">Local Syste...</div>
<svg style="position:absolute;left:351px;top:623px" width="16" height="16"><use href="#g"/></svg>
<div class="t" style="left:369px;top:623px;line-height:19px;color:#000;letter-spacing:-0.2px">Task Scheduler</div>
<div class="t" style="left:533px;top:623px;line-height:19px;color:#000;letter-spacing:-0.2px">Enables a us...</div>
<div class="t" style="left:618px;top:623px;line-height:19px;color:#000;letter-spacing:-0.2px">Running</div>
<div class="t" style="left:681px;top:623px;line-height:19px;color:#000;letter-spacing:-0.2px">Automatic</div>
<div class="t" style="left:773px;top:623px;line-height:19px;color:#000;letter-spacing:-0.2px">Local Syste...</div>
<svg style="position:absolute;left:351px;top:642px" width="16" height="16"><use href="#g"/></svg>
<div class="t" style="left:369px;top:642px;line-height:19px;color:#000;letter-spacing:-0.2px">Windows Modules Installer</div>
<div class="t" style="left:533px;top:642px;line-height:19px;color:#000;letter-spacing:-0.2px">Enables inst...</div>
<div class="t" style="left:681px;top:642px;line-height:19px;color:#000;letter-spacing:-0.2px">Manual</div>
<div class="t" style="left:773px;top:642px;line-height:19px;color:#000;letter-spacing:-0.2px">Local Syste...</div>
<svg style="position:absolute;left:351px;top:661px" width="16" height="16"><use href="#g"/></svg>
<div class="t" style="left:369px;top:661px;line-height:19px;color:#000;letter-spacing:-0.2px">Device Association Service</div>
<div class="t" style="left:533px;top:661px;line-height:19px;color:#000;letter-spacing:-0.2px">Enables pair...</div>
<div class="t" style="left:681px;top:661px;line-height:19px;color:#000;letter-spacing:-0.2px">Manual (Trig...</div>
<div class="t" style="left:773px;top:661px;line-height:19px;color:#000;letter-spacing:-0.2px">Local Syste...</div>
<svg style="position:absolute;left:351px;top:680px" width="16" height="16"><use href="#g"/></svg>
<div class="t" style="left:369px;top:680px;line-height:19px;color:#000;letter-spacing:-0.2px">Multimedia Class Scheduler</div>
<div class="t" style="left:533px;top:680px;line-height:19px;color:#000;letter-spacing:-0.2px">Enables rela...</div>
<div class="t" style="left:681px;top:680px;line-height:19px;color:#000;letter-spacing:-0.2px">Manual</div>
<div class="t" style="left:773px;top:680px;line-height:19px;color:#000;letter-spacing:-0.2px">Local Syste...</div>
<div style="position:absolute;left:351px;top:699px;width:16px;height:3px;overflow:hidden"><svg width="16" height="16"><use href="#g"/></svg></div>
<div style="left:972px;top:109px;width:17px;height:594px;background:#fff;border-left:1px solid #cdcdcd;border-right:1px solid #cdcdcd;box-sizing:border-box"></div>
<div style="left:972px;top:109px;width:17px;height:18px;background:#fff;border:1px solid #c4c4c4;box-sizing:border-box"></div>
<svg style="position:absolute;left:976px;top:115px" width="9" height="7"><path d="M0.8 5.5 L4.5 1.8 L8.2 5.5" stroke="#606060" stroke-width="1.3" fill="none"/></svg>
<div style="left:972px;top:126px;width:17px;height:122px;background:#dadada;border:1px solid #a6a6a6;box-sizing:border-box"></div>
<div style="left:977px;top:183px;width:7px;height:2px;background:#606060"></div>
<div style="left:977px;top:187px;width:7px;height:2px;background:#606060"></div>
<div style="left:977px;top:191px;width:7px;height:2px;background:#606060"></div>
<div style="left:972px;top:686px;width:17px;height:17px;background:#fff;border:1px solid #c4c4c4;box-sizing:border-box"></div>
<svg style="position:absolute;left:976px;top:691px" width="9" height="7"><path d="M1 1.5 L4.5 5 L8 1.5" stroke="#606060" stroke-width="1.3" fill="none"/></svg>
<div style="left:135px;top:703px;width:854px;height:1px;background:#e3e3e3"></div>
<div style="left:133px;top:705px;width:858px;height:19px;background:#f0f0f0;border-top:1px solid #6e6e6e;border-bottom:1px solid #a0a0a0;box-sizing:border-box"></div>
<svg style="position:absolute;left:0;top:0" width="300" height="730" shape-rendering="crispEdges">
<path d="M198 705 L266 705 L260 723 L207 723 Z" fill="#f0f0f0"/>
<path d="M205 705.5 H266" stroke="#6e6e6e" stroke-width="1"/>
<path d="M198.5 705 L207.5 723.5 M266.5 705 L260.5 723.5" stroke="#5a5a5a" stroke-width="1" fill="none"/>
<path d="M133 704 L206 704 L206 705 L197 723 L141 723 Z" fill="#fff"/>
<path d="M133.5 705 L141.5 723.5 M197.5 723.5 L205.5 705" stroke="#5a5a5a" stroke-width="1" fill="none"/>
</svg>
<div class="t" style="left:145px;top:707px;line-height:17px;letter-spacing:-0.3px">Extended</div>
<div class="t" style="left:209px;top:707px;line-height:17px;letter-spacing:-0.3px">Standard</div>
<div style="left:8px;top:724px;width:983px;height:23px;background:#fff;border:1px solid #a0a0a0;border-top:none;box-sizing:border-box"></div>
<div style="left:770px;top:725px;width:1px;height:21px;background:#d9d9d9"></div>
<div style="left:903px;top:725px;width:1px;height:21px;background:#d9d9d9"></div>
</body></html>
